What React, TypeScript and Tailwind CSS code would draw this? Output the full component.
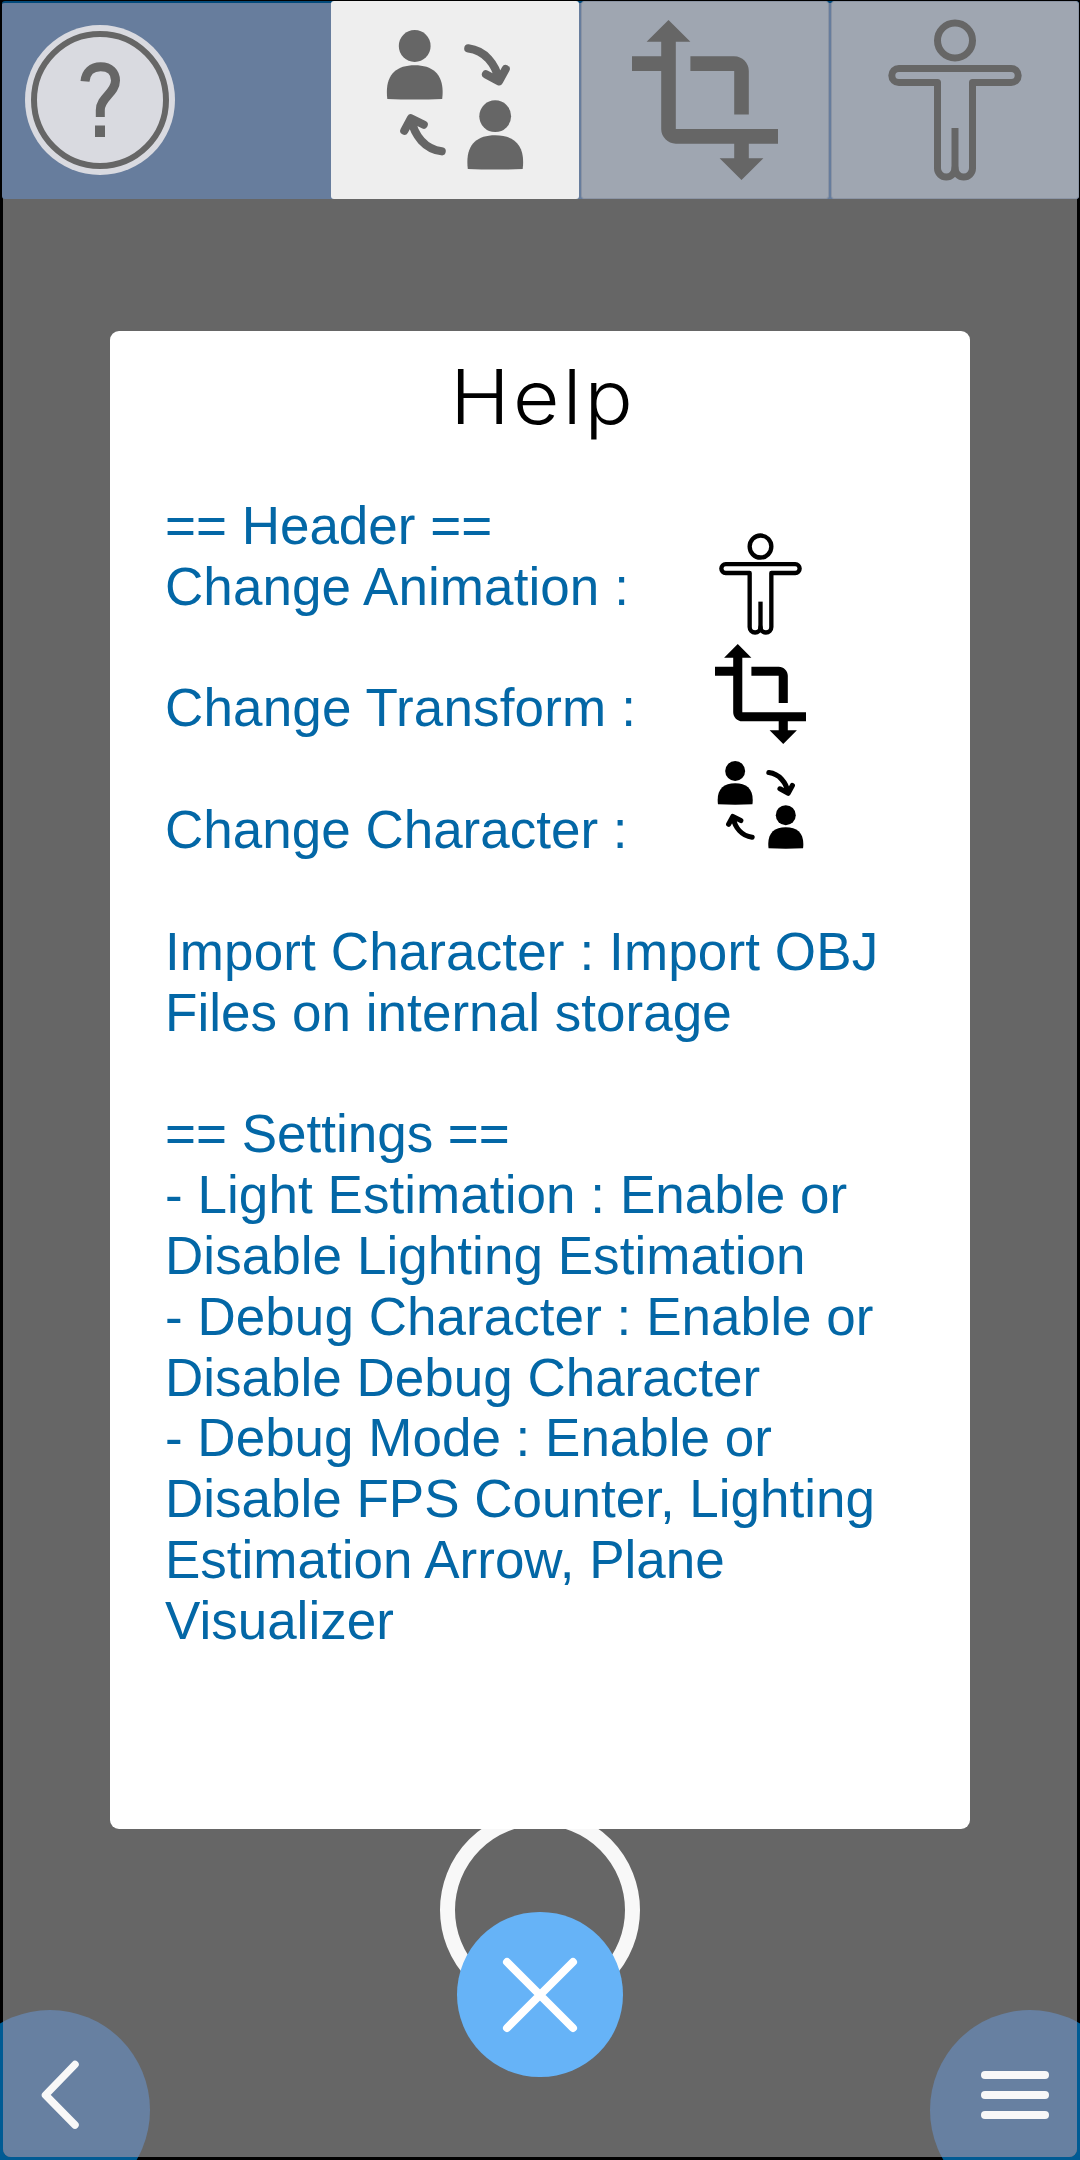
type IconProps = { className?: string };

function PersonIcon({ className }: IconProps) {
  return (
    <svg className={className} viewBox="8 9 134 162" preserveAspectRatio="none" fill="none" stroke="currentColor" strokeWidth="7">
      <circle cx="75" cy="30.5" r="17.5" />
      <path
        strokeLinejoin="round"
        d="M18.8 58.5H131.2a7 7 0 0 1 0 14H92.5V158.3a8.75 8.75 0 0 1-17.5 0a8.75 8.75 0 0 1-17.5 0V72.5H18.8a7 7 0 0 1 0-14Z"
      />
      <path d="M75 118V164" />
    </svg>
  );
}

function TransformIcon({ className }: IconProps) {
  return (
    <svg className={className} viewBox="2 1 20 22" preserveAspectRatio="none" fill="currentColor">
      <path d="M22 18v-2H8V4h2L7 1 4 4h2v2H2v2h4v8c0 1.1.9 2 2 2h8v2h-2l3 3 3-3h-2v-2h4zM10 8h6v6h2V8c0-1.1-.9-2-2-2h-6v2z" />
    </svg>
  );
}

function SwapIcon({ className }: IconProps) {
  return (
    <svg className={className} viewBox="0 0 138 140" fill="currentColor">
      <circle cx="28.7" cy="16" r="15.9" />
      <path d="M1.300 69C-1.500 46 9 35.300 28.700 35.300S59 46 56.200 69Q28.700 70.200 1.300 69Z" />
      <circle cx="109.200" cy="86.200" r="15.900" />
      <path d="M81.800 139C79 116 89.500 105.300 109.200 105.300S139.500 116 136.700 139Q109.200 140.200 81.800 139Z" />
      <g fill="none" stroke="currentColor" strokeWidth="8.200" strokeLinecap="round" strokeLinejoin="round">
        <path d="M82.300 18.400C99 20.500 109.500 34 113 50M100 44.300L113 51.300L119.700 39" />
        <path d="M55.700 121.300C39 119 28.500 106 25 89M18.300 100.700L25 88.300L37.700 94.700" />
      </g>
    </svg>
  );
}

function HelpIcon({ className }: IconProps) {
  return (
    <svg className={className} viewBox="0 0 138 138" fill="none" stroke="currentColor">
      <circle cx="69" cy="69" r="66" strokeWidth="6" />
      <path strokeWidth="9" d="M54 50.300C54.800 41 61 35.700 69.600 35.700C79.300 35.700 84.500 41.500 84.500 49.500C84.500 62 69.300 66.500 69.300 79V86" />
      <path strokeWidth="10" d="M69 94.500V106" />
    </svg>
  );
}

const helpLines = [
  { text: "== Header ==" },
  { text: "Change Animation :", spacing: "tracking-[0.08px]" },
  { text: "" },
  { text: "Change Transform :", spacing: "tracking-[0.15px]" },
  { text: "" },
  { text: "Change Character :" },
  { text: "" },
  { text: "Import Character : Import OBJ", spacing: "tracking-[0.12px]" },
  { text: "Files on internal storage", spacing: "tracking-[0.05px]" },
  { text: "" },
  { text: "== Settings ==" },
  { text: "- Light Estimation : Enable or", spacing: "tracking-[0.06px]" },
  { text: "Disable Lighting Estimation", spacing: "tracking-[0.05px]" },
  { text: "- Debug Character : Enable or", spacing: "tracking-[0.05px]" },
  { text: "Disable Debug Character" },
  { text: "- Debug Mode : Enable or" },
  { text: "Disable FPS Counter, Lighting" },
  { text: "Estimation Arrow, Plane" },
  { text: "Visualizer" },
];

function Header() {
  return (
    <header className="relative mr-px ml-0.5 flex h-[198px] gap-[2px] rounded-[3px] border-t-2 border-[#024a7b] bg-[#677d9d] text-[#666]">
      <div className="flex flex-1 items-center pl-[23px]">
        <button className="-mt-0.5 flex size-[150px] items-center justify-center rounded-full bg-[#d9dae0]">
          <HelpIcon className="size-[138px]" />
        </button>
      </div>
      <button className="-mt-0.5 flex w-[248px] items-start justify-start rounded-[3px] bg-[#eee] pt-[29px] pl-[55px]">
        <SwapIcon className="h-[140px] w-[138px]" />
      </button>
      <button className="-mt-0.5 flex w-[248px] items-start rounded-[3px] border border-[#8b94a4] bg-[#9fa6b1] pt-[18px] pl-[50px]">
        <TransformIcon className="h-[160px] w-[146px]" />
      </button>
      <button className="-mt-0.5 flex w-[248px] items-start rounded-[3px] border border-[#8b94a4] bg-[#9fa6b1] pt-[17px] pl-[56px]">
        <PersonIcon className="h-[162px] w-[134px]" />
      </button>
    </header>
  );
}

function HelpCard() {
  return (
    <section className="relative mx-auto mt-[132px] h-[1498px] w-[860px] rounded-[9px] bg-white">
      <h1 className="flex h-[165px] scale-x-[1.07] items-start justify-center pt-[16px] pl-[6px] font-['Inter'] text-[75px] leading-[100px] font-light tracking-[3px] text-black">
        Help
      </h1>
      <div className="flex pl-[55px]">
        <div className="w-[545px] font-['Liberation_Sans'] text-[53px] leading-[60.84px] whitespace-nowrap text-[#0367a6]">
          {helpLines.map(({ text, spacing = "" }, i) => (
            <p key={i} className={`h-[60.84px] ${spacing}`}>
              {text}
            </p>
          ))}
        </div>
        <div className="flex w-[100px] flex-col items-center pt-[37px] text-black">
          <PersonIcon className="h-[102px] w-[83px]" />
          <TransformIcon className="mt-[9px] h-[100px] w-[91px]" />
          <SwapIcon className="mt-[17px] h-[88px] w-[87px]" />
        </div>
      </div>
    </section>
  );
}

export default function App() {
  return (
    <div className="relative h-[2160px] w-[1080px] overflow-hidden bg-black">
      <div className="absolute top-[2010px] left-[-50px] size-[200px] rounded-full bg-[#005b94]" />
      <div className="absolute top-[2010px] left-[930px] size-[200px] rounded-full bg-[#005b94]" />
      <div className="absolute inset-[3px] overflow-hidden rounded-lg bg-[#666]">
        <div className="absolute top-[1807px] left-[437px] size-[200px] rounded-full border-[15px] border-[#f8f8f8]" />
        <button className="absolute top-[2007px] left-[-53px] size-[200px] rounded-full bg-[#6780a1]">
          <svg className="absolute top-[48px] left-[88px]" width="50" height="75" fill="none" stroke="#f8f8f8" strokeWidth="7.500" strokeLinecap="round" strokeLinejoin="round">
            <path d="M37 6.500L7.500 37L37 67" />
          </svg>
        </button>
        <button className="absolute top-[2007px] left-[927px] flex size-[200px] flex-col items-start gap-3 rounded-full bg-[#6780a1] pt-[61px] pl-[51px]">
          <span className="h-2 w-[68px] rounded-full bg-[#f8f8f8]" />
          <span className="h-2 w-[68px] rounded-full bg-[#f8f8f8]" />
          <span className="h-2 w-[68px] rounded-full bg-[#f8f8f8]" />
        </button>
      </div>
      <main className="relative flex flex-col pt-px">
        <Header />
        <HelpCard />
        <button className="mx-auto mt-[83px] flex h-[165px] w-[166px] items-center justify-center rounded-full bg-[#66b3f7]">
          <svg width="76" height="76" fill="none" stroke="#fff" strokeWidth="8" strokeLinecap="round">
            <path d="M5 5L71 71M71 5L5 71" />
          </svg>
        </button>
      </main>
    </div>
  );
}
